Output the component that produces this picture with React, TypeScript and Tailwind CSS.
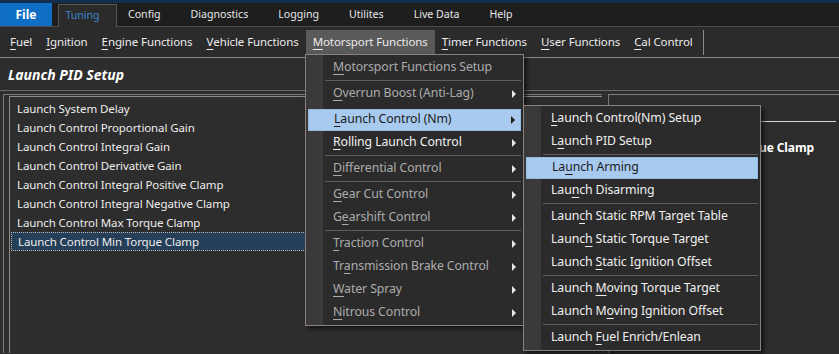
import React from "react";

type Item = {
  label: string;
  at: number;
  tone?: "dim" | "bright";
  arrow?: boolean;
  active?: boolean;
};
type Entry = Item | "sep" | "gap";

const TABS = ["Config", "Diagnostics", "Logging", "Utilites", "Live Data", "Help"];

const TOOLBAR: { label: string; at: number; open?: boolean }[] = [
  { label: "Fuel", at: 0 },
  { label: "Ignition", at: 0 },
  { label: "Engine Functions", at: 0 },
  { label: "Vehicle Functions", at: 0 },
  { label: "Motorsport Functions", at: 0, open: true },
  { label: "Timer Functions", at: 0 },
  { label: "User Functions", at: 0 },
  { label: "Cal Control", at: 0 },
];

const LIST = [
  "Launch System Delay",
  "Launch Control Proportional Gain",
  "Launch Control Integral Gain",
  "Launch Control Derivative Gain",
  "Launch Control Integral Positive Clamp",
  "Launch Control Integral Negative Clamp",
  "Launch Control Max Torque Clamp",
  "Launch Control Min Torque Clamp",
];

const MOTORSPORT: Entry[] = [
  { label: "Motorsport Functions Setup", at: 0, tone: "dim" },
  "sep",
  { label: "Overrun Boost (Anti-Lag)", at: 0, tone: "dim", arrow: true },
  "gap",
  { label: "Launch Control (Nm)", at: 0, active: true, arrow: true },
  { label: "Rolling Launch Control", at: 0, tone: "bright", arrow: true },
  "sep",
  { label: "Differential Control", at: 0, tone: "dim", arrow: true },
  "sep",
  { label: "Gear Cut Control", at: 0, tone: "dim", arrow: true },
  { label: "Gearshift Control", at: 1, tone: "dim", arrow: true },
  "sep",
  { label: "Traction Control", at: 0, tone: "dim", arrow: true },
  { label: "Transmission Brake Control", at: 2, tone: "dim", arrow: true },
  { label: "Water Spray", at: 0, tone: "dim", arrow: true },
  { label: "Nitrous Control", at: 0, tone: "dim", arrow: true },
];

const LAUNCH: Entry[] = [
  { label: "Launch Control(Nm) Setup", at: 0 },
  { label: "Launch PID Setup", at: 1 },
  "sep",
  { label: "Launch Arming", at: 2, active: true },
  { label: "Launch Disarming", at: 3 },
  "sep",
  { label: "Launch Static RPM Target Table", at: 4 },
  { label: "Launch Static Torque Target", at: 5 },
  { label: "Launch Static Ignition Offset", at: 7 },
  "sep",
  { label: "Launch Moving Torque Target", at: 7 },
  { label: "Launch Moving Ignition Offset", at: 8 },
  "sep",
  { label: "Launch Fuel Enrich/Enlean", at: 7 },
];

function Acc({ text, at }: { text: string; at: number }) {
  return (
    <>
      {text.slice(0, at)}
      <span className="underline underline-offset-[3px]">{text[at]}</span>
      {text.slice(at + 1)}
    </>
  );
}

function Menu({ entries, className }: { entries: Entry[]; className: string }) {
  return (
    <div
      className={`absolute flex flex-col border border-[#8c7f80] bg-[#2b2b2b] py-px text-[12.3px] shadow-[3px_3px_4px_rgba(0,0,0,0.55)] ${className}`}
    >
      {/* icon gutter */}
      <div className="absolute top-0 bottom-0 left-0 w-[17px] bg-[#3a3a3a]" />
      {entries.map((e, i) => {
        if (e === "sep") {
          return (
            <div key={i} className="relative flex h-[3px] items-center pl-[19px] pr-[2px]">
              <div className="h-px w-full bg-[#5c5c5c]" />
            </div>
          );
        }
        if (e === "gap") return <div key={i} className="h-[3px]" />;
        const color = e.active
          ? "text-[#1b1b1b]"
          : e.tone === "dim"
            ? "text-[#ababab]"
            : "text-[#f0f0f0]";
        return (
          <div key={i} className="relative flex h-[23px] items-center px-[2px]">
            <div
              className={`flex h-[22px] w-full items-center pl-[25px] ${
                e.active ? "border border-[#96bbe3] bg-[#a8caef]" : ""
              }`}
            >
              <span className={`whitespace-nowrap ${color}`}>
                <Acc text={e.label} at={e.at} />
              </span>
              {e.arrow ? (
                <span
                  className={`ml-auto mr-[5px] h-0 w-0 border-y-[4px] border-l-[4px] border-y-transparent ${
                    e.active ? "border-l-[#1b1b1b]" : "border-l-[#e6e6e6]"
                  }`}
                />
              ) : null}
            </div>
          </div>
        );
      })}
    </div>
  );
}

export default function App() {
  return (
    <div className="relative h-[354px] w-[839px] overflow-hidden bg-[#2d2d2d] font-['Noto_Sans',sans-serif] text-[11.5px] tracking-[-0.1px] text-[#ececec]">
      {/* window accent */}
      <div className="h-[3px] bg-[#12304e]" />

      {/* ribbon tabs */}
      <div className="flex h-[24px] items-end border-b border-[#4a4a4a] bg-[#1e1e1e] text-[10.6px] tracking-normal">
        <div className="flex h-full w-[52px] items-center justify-center bg-[#0e6fc4] text-[12px] font-bold text-white">
          File
        </div>
        <div className="relative -mb-px ml-[6px] flex h-[23px] w-[59px] items-center justify-center border border-b-0 border-[#555] bg-[#2b2b2b] pr-[10px] text-[#3a86d0]">
          Tuning
        </div>
        <div className="flex h-full items-center gap-[30px] pl-[11px] text-[#e6e6e6]">
          {TABS.map((t) => (
            <span key={t} className="whitespace-nowrap">
              {t}
            </span>
          ))}
        </div>
      </div>

      {/* toolbar */}
      <div className="flex h-[31px] items-center border-b border-[#8a8a8a] bg-[#2b2b2b] pl-[3px]">
        {TOOLBAR.map((t) => (
          <div
            key={t.label}
            className={`flex h-[24px] items-center whitespace-nowrap px-[7px] ${
              t.open ? "bg-[#5a5a5a]" : ""
            }`}
          >
            <Acc text={t.label} at={t.at} />
          </div>
        ))}
        <div className="ml-[3px] h-[25px] w-px bg-[#8a8a8a]" />
      </div>

      {/* page header */}
      <div className="flex h-[33px] items-center border-b border-[#6a6a6a] pl-[8px] text-[14px] font-bold italic tracking-normal text-white">
        Launch PID Setup
      </div>

      {/* content */}
      <div className="flex h-[262px] gap-[6px] pt-[3px] pl-[3px]">
        <div className="w-[599px] border-t border-l border-[#7c7c7c] pt-[1px] pl-[5px]">
          <div className="h-full border-t border-l border-[#8c8c8c] pt-[2px] pl-[1px]">
            {LIST.map((l, i) => (
              <div
                key={l}
                className={`flex h-[19px] items-center pl-[6px] whitespace-nowrap ${
                  i === LIST.length - 1
                    ? "border border-dotted border-[#b8b8b8] bg-[#253f58] pl-[5px]"
                    : ""
                }`}
              >
                {l}
              </div>
            ))}
          </div>
        </div>
        <div className="flex-1 border-t border-l border-[#7c7c7c] pt-[26px]">
          <div className="mr-[3px] h-px bg-[#d6d6d6]" />
          <div className="pt-[17px] pl-[6px] text-[12px] font-bold whitespace-nowrap text-white">
            Launch Control Min Torque Clamp
          </div>
        </div>
      </div>

      {/* open menus */}
      <Menu entries={MOTORSPORT} className="top-[54px] left-[305px] w-[219px]" />
      <Menu entries={LAUNCH} className="top-[105px] left-[523px] w-[238px]" />
    </div>
  );
}
